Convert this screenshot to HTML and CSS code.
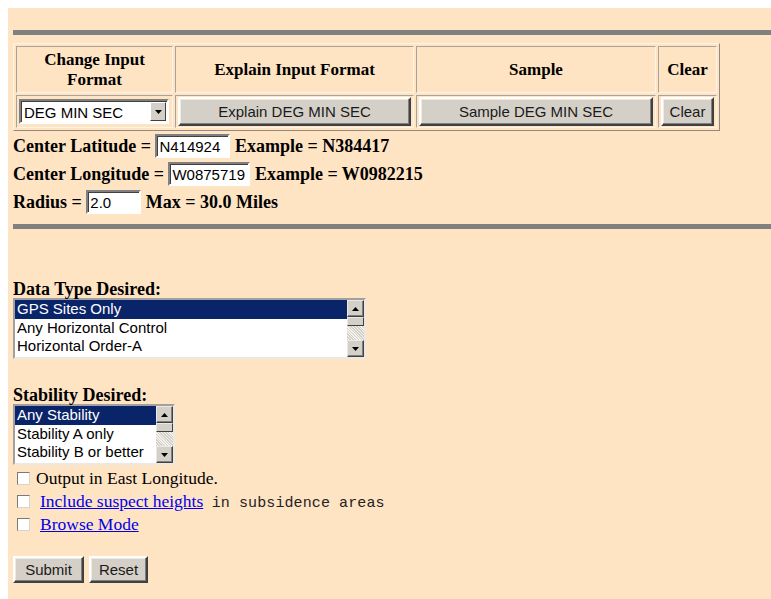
FILE: index.html
```html
<!DOCTYPE html>
<html lang="en">
<head>
<meta charset="utf-8">
<title>Radial Search</title>
<link rel="stylesheet" href="styles.css">
</head>
<body>
<div class="page">
  <form class="search" onsubmit="return false">
    <hr class="rule rule-top">

    <table class="fmt">
      <tr>
        <th class="c1">Change Input<br>Format</th>
        <th class="c2">Explain Input Format</th>
        <th class="c3">Sample</th>
        <th class="c4">Clear</th>
      </tr>
      <tr>
        <td>
          <div class="dropdown">
            <span class="dropdown-value">DEG MIN SEC</span>
            <span class="dropdown-arrow">
              <svg width="7" height="4" viewBox="0 0 7 4"><path d="M0 0h7L3.5 4z" fill="#000"/></svg>
            </span>
          </div>
        </td>
        <td><button type="button" class="btn btn-wide">Explain DEG MIN SEC</button></td>
        <td><button type="button" class="btn btn-wide">Sample DEG MIN SEC</button></td>
        <td><button type="button" class="btn btn-wide">Clear</button></td>
      </tr>
    </table>

    <div class="coords">
      <div class="coord-row">Center Latitude = <input class="field f-lat" type="text" value="N414924"> Example = N384417</div>
      <div class="coord-row">Center Longitude = <input class="field f-lon" type="text" value="W0875719"> Example = W0982215</div>
      <div class="coord-row">Radius = <input class="field f-rad" type="text" value="2.0"> Max = 30.0 Miles</div>
    </div>

    <hr class="rule rule-mid">

    <div class="label label-data">Data Type Desired:</div>
    <div class="listbox list-data">
      <div class="list-items">
        <div class="opt opt-sel">GPS Sites Only</div>
        <div class="opt">Any Horizontal Control</div>
        <div class="opt">Horizontal Order-A</div>
      </div>
      <div class="vscroll">
        <span class="sb-btn"><svg width="7" height="4" viewBox="0 0 7 4"><path d="M0 4h7L3.5 0z" fill="#000"/></svg></span>
        <span class="sb-thumb"></span>
        <span class="sb-track"></span>
        <span class="sb-btn"><svg width="7" height="4" viewBox="0 0 7 4"><path d="M0 0h7L3.5 4z" fill="#000"/></svg></span>
      </div>
    </div>

    <div class="label label-stab">Stability Desired:</div>
    <div class="listbox list-stab">
      <div class="list-items">
        <div class="opt opt-sel">Any Stability</div>
        <div class="opt">Stability A only</div>
        <div class="opt">Stability B or better</div>
      </div>
      <div class="vscroll">
        <span class="sb-btn"><svg width="7" height="4" viewBox="0 0 7 4"><path d="M0 4h7L3.5 0z" fill="#000"/></svg></span>
        <span class="sb-thumb"></span>
        <span class="sb-track"></span>
        <span class="sb-btn"><svg width="7" height="4" viewBox="0 0 7 4"><path d="M0 0h7L3.5 4z" fill="#000"/></svg></span>
      </div>
    </div>

    <div class="checks">
      <div class="check-row"><input type="checkbox" class="cb" id="east"><label for="east">Output in East Longitude.</label></div>
      <div class="check-row"><input type="checkbox" class="cb cb-link"><a href="#" class="link">Include suspect heights</a> <code class="mono">in subsidence areas</code></div>
      <div class="check-row"><input type="checkbox" class="cb cb-link"><a href="#" class="link">Browse Mode</a></div>
    </div>

    <div class="actions">
      <button type="submit" class="btn btn-act btn-submit">Submit</button>
      <button type="reset" class="btn btn-act btn-reset">Reset</button>
    </div>
  </form>
</div>
</body>
</html>
```

FILE: styles.css
```css
html, body {
  margin: 0;
  padding: 0;
  background: #ffffff;
  overflow: hidden;
}

.page {
  margin: 8px 0 0 8px;
  height: calc(100vh - 8px);
  box-sizing: border-box;
  background: #ffe4c4;
  padding: 22px 0 0 5px;
  font-family: "Liberation Serif", "Times New Roman", serif;
  font-size: 17px;
  color: #000;
}

.search {
  margin: 0;
}

/* horizontal separators */
.rule {
  height: 5px;
  margin: 0;
  border: none;
  background: #808080;
}
.rule-top {
  margin-bottom: 8px;
}
.rule-mid {
  margin-top: 8px;
}

/* input format table */
.fmt {
  border-collapse: separate;
  border-spacing: 2px;
  border: 1px solid;
  border-color: #fff3e6 #8f8a84 #8f8a84 #fff3e6;
  table-layout: fixed;
}
.fmt th,
.fmt td {
  box-sizing: border-box;
  border: 1px solid;
  border-color: #a8a29c #fff3e6 #fff3e6 #a8a29c;
  padding: 2px;
  text-align: center;
}
.fmt th {
  height: 47px;
  font-size: 17px;
  line-height: 20px;
  font-weight: bold;
}
.fmt td {
  padding: 1px 2px;
}
.fmt .c1 { width: 157px; }
.fmt .c2 { width: 239px; }
.fmt .c3 { width: 240px; }
.fmt .c4 { width: 59px; }

/* classic push buttons */
.btn {
  font-family: "Liberation Sans", Arial, sans-serif;
  font-size: 15px;
  color: #1a1a1a;
  background: #d4d0c8;
  border: 2px solid;
  border-color: #ffffff #404040 #404040 #ffffff;
  box-shadow: inset -1px -1px 0 #808080, inset 1px 1px 0 #eeeae2;
  padding: 0 6px;
  height: 29px;
  cursor: pointer;
}
.btn-wide {
  display: block;
  width: 100%;
}
.btn-act {
  height: 27px;
  padding: 0;
}
.btn-submit { width: 71px; }
.btn-reset { width: 59px; }

/* drop-down selector */
.dropdown {
  display: flex;
  align-items: center;
  width: 150px;
  height: 25px;
  box-sizing: border-box;
  background: #ffffff;
  border: 2px solid;
  border-color: #808080 #ffffff #ffffff #808080;
  box-shadow: inset 1px 1px 0 #404040;
  font-family: "Liberation Sans", Arial, sans-serif;
  font-size: 15px;
}
.dropdown-value {
  flex: 1;
  text-align: left;
  padding-left: 3px;
  padding-top: 1px;
}
.dropdown-arrow {
  display: flex;
  align-items: center;
  justify-content: center;
  width: 16px;
  height: 19px;
  margin-right: 1px;
  box-sizing: border-box;
  background: #d4d0c8;
  border: 1px solid;
  border-color: #ffffff #404040 #404040 #ffffff;
}

/* coordinate lines */
.coords {
  margin-top: 1px;
  font-size: 18px;
  font-weight: bold;
}
.coord-row {
  height: 28px;
  display: flex;
  align-items: center;
  white-space: pre;
}
.field {
  font-family: "Liberation Sans", Arial, sans-serif;
  font-size: 15px;
  height: 24px;
  box-sizing: border-box;
  padding: 0 2px;
  margin: 0;
  background: #ffffff;
  border: 2px solid;
  border-color: #808080 #ffffff #ffffff #808080;
  box-shadow: inset 1px 1px 0 #404040;
  outline: none;
}
.f-lat { width: 75px; }
.f-lon { width: 82px; }
.f-rad { width: 55px; }

/* list sections */
.label {
  font-size: 18px;
  font-weight: bold;
  line-height: 18px;
  height: 18px;
}
.label-data { margin-top: 51px; }
.label-stab { margin-top: 27px; }

.listbox {
  display: flex;
  height: 61px;
  box-sizing: border-box;
  background: #ffffff;
  border: 2px solid;
  border-color: #a0a0a0 #ece9e4 #ece9e4 #a0a0a0;
  font-family: "Liberation Sans", Arial, sans-serif;
  font-size: 15px;
}
.list-data { width: 353px; }
.list-stab { width: 162px; }

.list-items {
  flex: 1;
  overflow: hidden;
}
.opt {
  height: 18.6px;
  line-height: 18px;
  padding-left: 2px;
  white-space: nowrap;
}
.opt-sel {
  background: #0a246a;
  color: #ffffff;
}

.vscroll {
  width: 17px;
  display: flex;
  flex-direction: column;
}
.sb-btn {
  display: flex;
  align-items: center;
  justify-content: center;
  height: 17px;
  box-sizing: border-box;
  background: #d4d0c8;
  border: 1px solid;
  border-color: #ece9e4 #404040 #404040 #ece9e4;
  box-shadow: inset -1px -1px 0 #808080;
}
.sb-thumb {
  height: 9px;
  box-sizing: border-box;
  background: #d4d0c8;
  border: 1px solid;
  border-color: #ece9e4 #404040 #404040 #ece9e4;
}
.sb-track {
  flex: 1;
  background-color: #ece9e4;
  background-image: repeating-linear-gradient(45deg, #d4d0c8 0 1px, #f4f2ee 1px 2px);
}

/* option checkboxes */
.checks {
  margin-top: 2px;
}
.check-row {
  height: 23px;
  line-height: 23px;
  padding-left: 4px;
  font-size: 17.5px;
  white-space: nowrap;
}
.cb {
  appearance: none;
  -webkit-appearance: none;
  display: inline-block;
  vertical-align: -1px;
  width: 13px;
  height: 13px;
  margin: 0 6px 0 0;
  box-sizing: border-box;
  background: #ffffff;
  border: 1px solid;
  border-color: #7a7a7a #d8d4ce #d8d4ce #7a7a7a;
}
.cb-link {
  margin-right: 10px;
}
.link {
  color: #0000ee;
  text-decoration: underline;
}
.mono {
  font-family: "Liberation Mono", "Courier New", monospace;
  font-size: 15px;
  letter-spacing: 0.1px;
  margin-left: 4px;
  color: #222;
}

.actions {
  margin-top: 20px;
  display: flex;
  gap: 5px;
}
```
